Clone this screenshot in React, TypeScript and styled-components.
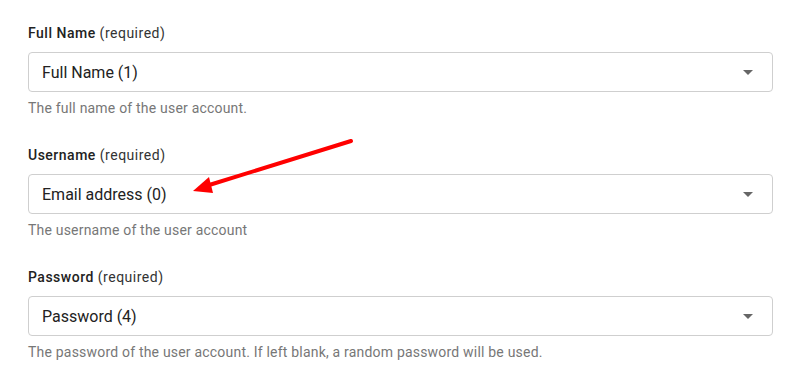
import { FC } from 'react';
import styled, { createGlobalStyle } from 'styled-components';

const GlobalStyle = createGlobalStyle`
    html, body {
        margin: 0;
        padding: 0;
        background: #fff;
        font-family: Roboto, "Liberation Sans", Arial, sans-serif;
    }
`;

const Form = styled.div`
    position: relative;
    display: flex;
    flex-direction: column;
    gap: 27px;
    padding: 23px 27px 0 28px;
`;

const Field = styled.div`
    display: flex;
    flex-direction: column;
`;

const Label = styled.div`
    font-size: 14px;
    letter-spacing: 0.5px;
    line-height: 20px;
    color: #333;
    margin-bottom: 9px;

    strong {
        font-weight: 500;
        color: #222;
    }
`;

const Select = styled.div`
    box-sizing: border-box;
    height: 40px;
    border: 1px solid #cfcfcf;
    border-radius: 4px;
    display: flex;
    align-items: center;
    justify-content: space-between;
    padding: 0 19px 0 13px;
    font-size: 16px;
    color: #222;
`;

const Caret = styled.span`
    width: 0;
    height: 0;
    border-left: 5px solid transparent;
    border-right: 5px solid transparent;
    border-top: 5px solid #666;
`;

const Help = styled.div`
    margin-top: 6px;
    font-size: 14px;
    letter-spacing: 0.2px;
    line-height: 20px;
    color: #777;
`;

const Arrow = styled.svg`
    position: absolute;
    left: 0;
    top: 0;
    pointer-events: none;
`;

const fields = [
    { label: 'Full Name', value: 'Full Name (1)', help: 'The full name of the user account.' },
    { label: 'Username', value: 'Email address (0)', help: 'The username of the user account' },
    { label: 'Password', value: 'Password (4)', help: 'The password of the user account. If left blank, a random password will be used.' },
];

const App: FC = () => {
    return (
        <>
            <GlobalStyle />
            <Form>
                {fields.map((f) => (
                    <Field key={f.label}>
                        <Label>
                            <strong>{f.label}</strong> (required)
                        </Label>
                        <Select>
                            <span>{f.value}</span>
                            <Caret />
                        </Select>
                        <Help>{f.help}</Help>
                    </Field>
                ))}
                <Arrow width="800" height="381" viewBox="0 0 800 381">
                    <line x1="351" y1="141" x2="206" y2="186" stroke="#ff0000" strokeWidth="4" strokeLinecap="round" />
                    <polygon points="193,191 209,177 213,193" fill="#ff0000" />
                </Arrow>
            </Form>
        </>
    );
};

export default App;
